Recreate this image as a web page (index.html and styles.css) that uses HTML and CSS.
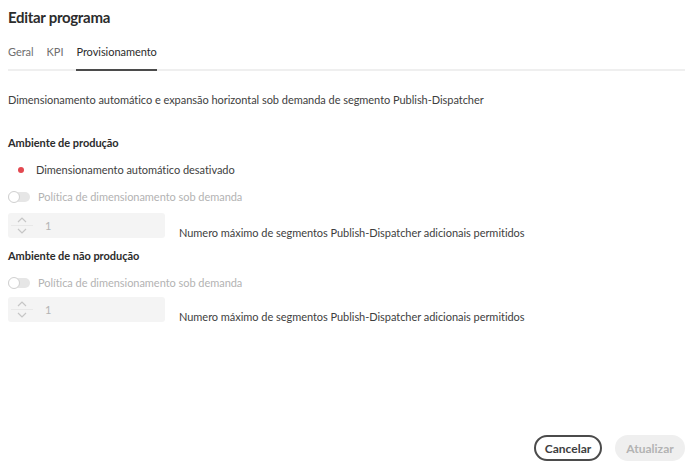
FILE: index.html
```html
<!DOCTYPE html>
<html lang="pt">
<head>
<meta charset="utf-8">
<title>Editar programa</title>
<link rel="stylesheet" href="styles.css">
</head>
<body>
<div class="dialog">
  <h1 class="title">Editar programa</h1>
  <nav class="tabs">
    <span class="tab">Geral</span>
    <span class="tab">KPI</span>
    <span class="tab active">Provisionamento</span>
  </nav>
  <p class="desc">Dimensionamento automático e expansão horizontal sob demanda de segmento Publish-Dispatcher</p>

  <h2 class="heading first">Ambiente de produção</h2>
  <div class="status"><span class="dot"></span>Dimensionamento automático desativado</div>
  <div class="switch-row"><span class="switch"><span class="knob"></span></span>Política de dimensionamento sob demanda</div>
  <div class="stepper-row">
    <div class="stepper">
      <div class="arrows">
        <svg width="10" height="6" viewBox="0 0 10 6"><path d="M1 5 L5 1 L9 5" fill="none" stroke="#c6c6c6" stroke-width="1.2"/></svg>
        <span class="sep"></span>
        <svg width="10" height="6" viewBox="0 0 10 6"><path d="M1 1 L5 5 L9 1" fill="none" stroke="#c6c6c6" stroke-width="1.2"/></svg>
      </div>
      <span class="value">1</span>
    </div>
    <span class="hint">Numero máximo de segmentos Publish-Dispatcher adicionais permitidos</span>
  </div>

  <h2 class="heading">Ambiente de não produção</h2>
  <div class="switch-row"><span class="switch"><span class="knob"></span></span>Política de dimensionamento sob demanda</div>
  <div class="stepper-row second">
    <div class="stepper">
      <div class="arrows">
        <svg width="10" height="6" viewBox="0 0 10 6"><path d="M1 5 L5 1 L9 5" fill="none" stroke="#c6c6c6" stroke-width="1.2"/></svg>
        <span class="sep"></span>
        <svg width="10" height="6" viewBox="0 0 10 6"><path d="M1 1 L5 5 L9 1" fill="none" stroke="#c6c6c6" stroke-width="1.2"/></svg>
      </div>
      <span class="value">1</span>
    </div>
    <span class="hint">Numero máximo de segmentos Publish-Dispatcher adicionais permitidos</span>
  </div>

  <div class="footer">
    <button class="btn secondary">Cancelar</button>
    <button class="btn disabled">Atualizar</button>
  </div>
</div>
</body>
</html>
```
FILE: styles.css
```css
* { box-sizing: border-box; }
html, body { margin: 0; padding: 0; background: #fff; }
body {
  font-family: Lato, "Open Sans", sans-serif;
  font-size: 11px;
  letter-spacing: -0.04px;
  color: #4b4b4b;
}
.dialog {
  width: 694px;
  height: 474px;
  padding: 6px 9px 0 8px;
  display: flex;
  flex-direction: column;
}
.title {
  margin: 0;
  font-size: 15px;
  letter-spacing: -0.3px;
  font-weight: 700;
  line-height: 22px;
  color: #2c2c2c;
}
.tabs {
  margin-top: 16px;
  display: flex;
  gap: 13px;
  border-bottom: 2px solid #efefef;
}
.tab {
  line-height: 16px;
  padding-bottom: 9px;
  color: #6e6e6e;
  margin-bottom: -2px;
  border-bottom: 2px solid transparent;
}
.tab.active {
  color: #2c2c2c;
  border-bottom-color: #4b4b4b;
}
.desc {
  margin: 21px 0 0;
  line-height: 16px;
  color: #3e3e3e;
}
.heading {
  margin: 10px 0 0;
  font-size: 11px;
  font-weight: 700;
  line-height: 16px;
  color: #2c2c2c;
}
.heading.first { margin-top: 27px; }
.status {
  margin-top: 11px;
  display: flex;
  align-items: center;
  line-height: 16px;
  color: #3e3e3e;
}
.dot {
  width: 6px; height: 6px;
  border-radius: 50%;
  background: #e34850;
  margin: 0 12px 0 10px;
}
.switch-row {
  margin-top: 11px;
  display: flex;
  align-items: center;
  line-height: 16px;
  color: #b3b3b3;
}
.switch {
  position: relative;
  width: 22px; height: 10px;
  border-radius: 5px;
  background: #e6e6e6;
  margin-right: 8px;
}
.knob {
  position: absolute;
  left: 0; top: -1px;
  width: 12px; height: 12px;
  border-radius: 50%;
  background: #fff;
  border: 1.5px solid #d0d0d0;
}
.stepper-row {
  margin-top: 8px;
  display: flex;
  align-items: flex-end;
}
.stepper-row.second { margin-top: 6px; }
.stepper {
  width: 157px;
  height: 25px;
  border-radius: 3px;
  background: #f4f4f4;
  display: flex;
  align-items: center;
}
.arrows {
  width: 28px;
  display: flex;
  flex-direction: column;
  align-items: center;
  gap: 2px;
}
.sep { width: 22px; height: 1px; background: #e8e8e8; }
.arrows svg { display: block; }
.value { margin-left: 9px; color: #b3b3b3; }
.hint {
  margin-left: 14px;
  line-height: 16px;
  margin-bottom: -3px;
  color: #3e3e3e;
}
.footer {
  margin-top: auto;
  margin-bottom: 13px;
  display: flex;
  justify-content: flex-end;
  gap: 13px;
}
.btn {
  font-family: inherit;
  font-size: 12px;
  font-weight: 700;
  height: 26px;
  border-radius: 13px;
  padding: 0 6px;
}
.btn.secondary {
  background: #fff;
  border: 2px solid #4b4b4b;
  color: #3e3e3e;
  width: 68px;
}
.btn.disabled {
  background: #efefef;
  border: 2px solid #efefef;
  color: #b3b3b3;
  width: 70px;
}
```
